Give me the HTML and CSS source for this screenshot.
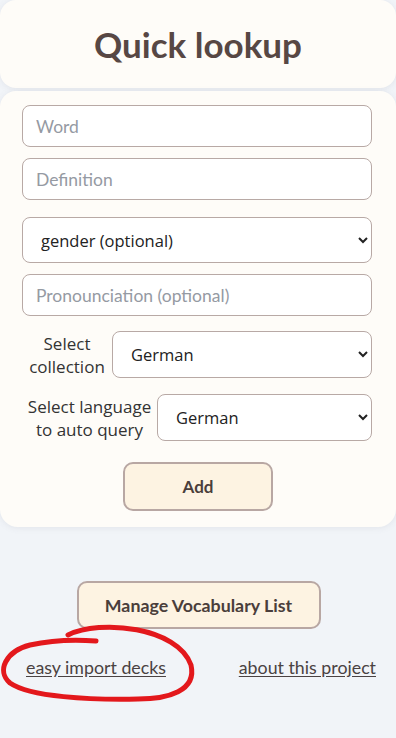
FILE: index.html
```html
<!DOCTYPE html>
<html>
<head>
<meta charset="utf-8">
<link rel="stylesheet" href="styles.css">
</head>
<body>
<div class="page">
  <header class="card header-card">
    <h1 class="title">Quick lookup</h1>
  </header>
  <form class="card form-card">
    <input class="field" type="text" placeholder="Word">
    <input class="field field-gap" type="text" placeholder="Definition">
    <select class="field select big-gap">
      <option>gender (optional)</option>
    </select>
    <input class="field field-gap" type="text" placeholder="Pronounciation (optional)">
    <div class="row row-first">
      <label class="row-label label-collection">Select collection</label>
      <select class="field select row-select"><option>German</option></select>
    </div>
    <div class="row row-second">
      <label class="row-label label-lang">Select language to auto query</label>
      <select class="field select row-select"><option>German</option></select>
    </div>
    <button type="button" class="btn add-btn">Add</button>
  </form>
  <div class="footer">
    <button type="button" class="btn manage-btn">Manage Vocabulary List</button>
    <div class="links">
      <a class="link" href="#">easy import decks</a>
      <a class="link" href="#">about this project</a>
    </div>
    <svg class="scribble" width="200" height="90" viewBox="0 0 200 90">
      <path d="M68,14 C100,-2 178,6 191,44 C197,70 168,78 138,78 C90,79 30,76 10,62 C-4,50 6,30 30,24 C48,20 70,18 96,20" fill="none" stroke="#e3181c" stroke-width="5" stroke-linecap="round" stroke-linejoin="round"/>
    </svg>
  </div>
</div>
</body>
</html>
```
FILE: styles.css
```css
html, body {
  margin: 0;
  padding: 0;
  background: #f1f4f8;
}
.page {
  width: 396px;
  min-height: 738px;
  position: relative;
  font-family: Lato, "Liberation Sans", sans-serif;
}
.card {
  background: #fefcf8;
  border-radius: 16px;
  box-shadow: 0 1px 6px rgba(120, 120, 140, 0.12);
}
.header-card {
  height: 88px;
  display: flex;
  align-items: center;
  justify-content: center;
}
.title {
  margin: 0;
  font-family: Lato, sans-serif;
  font-weight: 700;
  font-size: 35px;
  color: #574744;
}
.form-card {
  margin-top: 3px;
  padding: 14px 24px 16px 22px;
  display: flex;
  flex-direction: column;
  border-radius: 16px 16px 18px 18px;
}
.field {
  box-sizing: border-box;
  width: 350px;
  height: 42px;
  border: 1px solid #b8a9a5;
  border-radius: 8px;
  background: #fff;
  padding: 0 13px;
  font-family: Lato, sans-serif;
  font-size: 17.5px;
  color: #333;
  outline: none;
}
.field::placeholder {
  color: #959aa3;
}
.field-gap {
  margin-top: 11px;
}
.big-gap {
  margin-top: 17px;
}
.select {
  height: 46px;
  font-family: "Open Sans", "Noto Sans", sans-serif;
  font-size: 16.5px;
  color: #222;
  padding: 0 14px 0 14px;
}
.row {
  display: flex;
  align-items: center;
  width: 350px;
}
.row-first {
  margin-top: 15px;
}
.row-second {
  margin-top: 16px;
}
.row-label {
  font-family: "Open Sans", "Noto Sans", sans-serif;
  font-size: 17px;
  line-height: 23px;
  color: #333;
  text-align: center;
  flex: none;
}
.label-collection {
  width: 90px;
}
.label-lang {
  width: 135px;
}
.row-select {
  flex: 1;
  width: auto;
  min-width: 0;
  height: 47px;
}
.btn {
  background: #fdf3e2;
  border: 2px solid #b8a7a3;
  border-radius: 10px;
  font-family: Lato, sans-serif;
  font-weight: 700;
  font-size: 17px;
  color: #4a3e3b;
  cursor: pointer;
}
.add-btn {
  align-self: center;
  margin-top: 21px;
  width: 150px;
  height: 49px;
  margin-left: 2px;
}
.footer {
  position: relative;
  display: flex;
  flex-direction: column;
  align-items: center;
  padding-top: 54px;
}
.manage-btn {
  width: 244px;
  height: 48px;
  font-size: 17.8px;
  margin-left: 1px;
}
.links {
  width: 396px;
  display: flex;
  justify-content: space-between;
  box-sizing: border-box;
  padding: 27px 20px 0 26px;
}
.link {
  font-family: Lato, sans-serif;
  font-size: 17.8px;
  color: #4a4242;
  text-decoration: underline;
  text-underline-offset: 2px;
}
.scribble {
  position: absolute;
  left: 0;
  top: 94px;
  pointer-events: none;
}
```
